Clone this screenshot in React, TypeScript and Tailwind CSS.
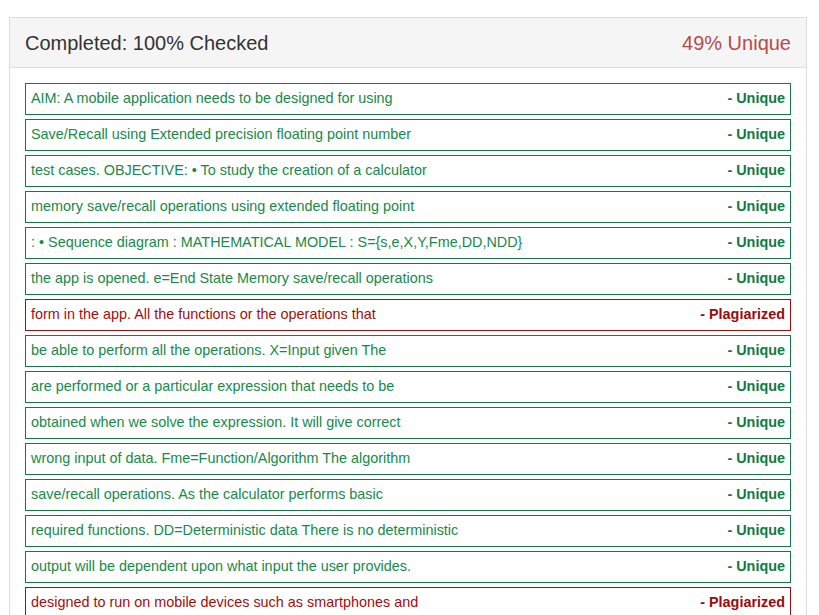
type Row = { text: string; plag?: boolean };

const rows: Row[] = [
  { text: "AIM: A mobile application needs to be designed for using" },
  { text: "Save/Recall using Extended precision floating point number" },
  { text: "test cases. OBJECTIVE: • To study the creation of a calculator" },
  { text: "memory save/recall operations using extended floating point" },
  { text: ": • Sequence diagram : MATHEMATICAL MODEL : S={s,e,X,Y,Fme,DD,NDD}" },
  { text: "the app is opened. e=End State Memory save/recall operations" },
  { text: "form in the app. All the functions or the operations that", plag: true },
  { text: "be able to perform all the operations. X=Input given The" },
  { text: "are performed or a particular expression that needs to be" },
  { text: "obtained when we solve the expression. It will give correct" },
  { text: "wrong input of data. Fme=Function/Algorithm The algorithm" },
  { text: "save/recall operations. As the calculator performs basic" },
  { text: "required functions. DD=Deterministic data There is no deterministic" },
  { text: "output will be dependent upon what input the user provides." },
  { text: "designed to run on mobile devices such as smartphones and", plag: true },
];

export default function App() {
  return (
    <div className="h-[615px] overflow-hidden bg-white pt-[17px] font-['Liberation_Sans',Arial,sans-serif]">
      <div className="ml-[9px] w-[798px] border border-[#dddddd] bg-white">
        {/* Header */}
        <div className="flex h-[50px] items-center justify-between border-b border-[#dddddd] bg-[#f5f5f5] px-[15px] text-[20px]">
          <span className="text-[#333333]">Completed: 100% Checked</span>
          <span className="text-[#b94a48]">49% Unique</span>
        </div>

        {/* Results */}
        <div className="flex flex-col gap-[4px] px-[15px] pt-[15px] pb-[15px]">
          {rows.map((r, i) => (
            <div
              key={i}
              className={
                r.plag
                  ? "flex h-[32px] items-center justify-between border border-[#a50d0d] px-[5px] text-[14.4px] text-[#a50d0d]"
                  : "flex h-[32px] items-center justify-between border border-[#137a45] px-[5px] text-[14.4px] text-[#168a4a]"
              }
            >
              <span>{r.text}</span>
              <span className={r.plag ? "font-bold text-[#9c0b0b]" : "font-bold text-[#0f7a42]"}>
                {r.plag ? "- Plagiarized" : "- Unique"}
              </span>
            </div>
          ))}
        </div>
      </div>
    </div>
  );
}
